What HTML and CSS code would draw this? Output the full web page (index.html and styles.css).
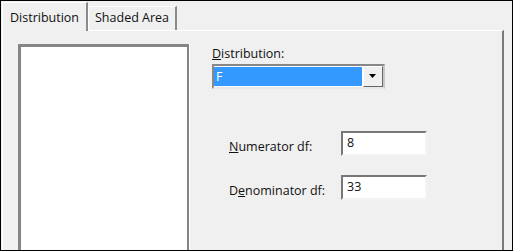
FILE: index.html
```html
<!DOCTYPE html>
<html lang="en">
<head>
    <meta charset="UTF-8">
    <title>Distribution Plot</title>
    <link rel="stylesheet" href="styles.css">
</head>
<body>

    <div class="window">
        <div class="tabs">
            <div class="tab active">Distribution</div>
            <div class="tab">Shaded Area</div>
        </div>

        <div class="panel">
            <div class="listbox"></div>

            <div class="options">
                <div class="field-label"><u>D</u>istribution:</div>
                <div class="combo">
                    <div class="combo-value">F</div>
                    <div class="combo-btn">
                        <svg width="8" height="5" viewBox="0 0 8 5"><path d="M0 0h7L3.5 4z" fill="#000"/></svg>
                    </div>
                </div>

                <div class="params">
                    <div class="param-row">
                        <label for="numDf"><u>N</u>umerator df:</label>
                        <input type="text" id="numDf" value="8">
                    </div>
                    <div class="param-row">
                        <label for="denDf">D<u>e</u>nominator df:</label>
                        <input type="text" id="denDf" value="33">
                    </div>
                </div>
            </div>
        </div>
    </div>

</body>
</html>
```

FILE: styles.css
```css
body {
    margin: 0;
    padding: 0;
    background-color: #fff;
    font-family: "Open Sans", "Liberation Sans", sans-serif;
    font-size: 12.5px;
    color: #111;
}

.window {
    width: 513px;
    height: 251px;
    box-sizing: border-box;
    border: 1px solid #000;
    background-color: #f0f0f0;
    overflow: hidden;
    padding: 1px 8px 0 1px;
}

.tabs {
    display: flex;
    align-items: flex-end;
    height: 28px;
}

.tab {
    box-sizing: border-box;
    height: 24px;
    padding: 2px 6px 0 6px;
    border-top: 1px solid #fff;
    border-left: 1px solid #fff;
    border-right: 2px solid #8a8a8a;
    background-color: #f0f0f0;
}

.tab.active {
    height: 29px;
    margin-bottom: -1px;
    padding: 6px 7px 0 7px;
    position: relative;
    z-index: 1;
}

.panel {
    display: flex;
    gap: 23px;
    height: 240px;
    padding: 13px 0 0 15px;
    border-top: 1px solid #fff;
    border-left: 1px solid #fff;
    border-right: 2px solid #7a7a7a;
}

.listbox {
    width: 166px;
    height: 220px;
    background-color: #fff;
    border: 3px solid #858585;
    border-right-width: 2px;
    box-shadow: 1px 0 0 #fff;
}

.options {
    display: flex;
    flex-direction: column;
    padding-top: 1px;
}

.field-label {
    line-height: 17px;
    margin-bottom: 2px;
}

.combo {
    display: flex;
    width: 173px;
    height: 25px;
    box-sizing: border-box;
    border: 2px solid #888;
    border-right-color: #c8c8c8;
    border-bottom-color: #e8e8e8;
    background-color: #fff;
}

.combo-value {
    flex: 1;
    margin: 1px 1px 1px 0;
    padding-left: 2px;
    background-color: #3399ff;
    color: #fff;
    line-height: 19px;
}

.combo-btn {
    width: 18px;
    display: flex;
    align-items: center;
    justify-content: center;
    background-color: #f0f0f0;
    border: 1px solid #fff;
    border-right-color: #666;
    border-bottom-color: #666;
}

.params {
    display: flex;
    flex-direction: column;
    gap: 19px;
    margin-top: 42px;
    padding-left: 17px;
}

.param-row {
    display: flex;
    align-items: center;
}

.param-row label {
    width: 112px;
    padding-top: 5px;
}

.param-row input {
    width: 86px;
    height: 25px;
    box-sizing: border-box;
    margin: 0;
    padding: 0 0 2px 4px;
    border: 2px solid #f4f4f4;
    border-top-color: #777;
    border-left-color: #777;
    background-color: #fff;
    font-family: inherit;
    font-size: 12.5px;
    color: #111;
    outline: none;
}
```
